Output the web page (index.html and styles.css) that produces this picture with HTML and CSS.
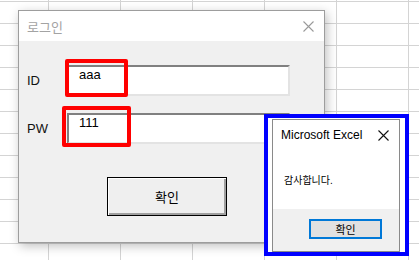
FILE: index.html
```html
<!DOCTYPE html>
<html lang="ko">
<head>
    <meta charset="UTF-8">
    <title>로그인</title>
    <link rel="stylesheet" href="styles.css">
</head>
<body>
    <div class="sheet">
        <!-- 로그인 폼 -->
        <div class="login-window">
            <div class="title-bar">
                <span class="title">로그인</span>
                <svg class="close gray" width="11" height="11" viewBox="0 0 11 11">
                    <path d="M0.5 0.5 L10.5 10.5 M10.5 0.5 L0.5 10.5" stroke="currentColor" stroke-width="1.1" fill="none"/>
                </svg>
            </div>
            <div class="login-body">
                <div class="form-row">
                    <label for="userId">ID</label>
                    <div class="textbox" id="userId">aaa</div>
                </div>
                <div class="form-row">
                    <label for="userPw">PW</label>
                    <div class="textbox" id="userPw">111</div>
                </div>
                <button class="ok-button">확인</button>
            </div>
        </div>

        <div class="mark mark-id"></div>
        <div class="mark mark-pw"></div>

        <!-- 메시지 박스 -->
        <div class="msg-frame">
            <div class="msg-box">
                <div class="msg-title">
                    <span>Microsoft Excel</span>
                    <svg class="close" width="11" height="11" viewBox="0 0 11 11">
                        <path d="M0.5 0.5 L10.5 10.5 M10.5 0.5 L0.5 10.5" stroke="currentColor" stroke-width="1.1" fill="none"/>
                    </svg>
                </div>
                <div class="msg-text">감사합니다.</div>
                <div class="msg-footer">
                    <button class="msg-button">확인</button>
                </div>
            </div>
        </div>
    </div>
</body>
</html>
```

FILE: styles.css
```css
* {
    margin: 0;
    padding: 0;
    box-sizing: border-box;
    font-family: 'Liberation Sans', 'Noto Sans CJK KR', sans-serif;
}

body {
    width: 419px;
    height: 260px;
    overflow: hidden;
    background-color: #fff;
    background-image:
        linear-gradient(90deg, #d4d4d4 1px, transparent 1px),
        linear-gradient(180deg, #d4d4d4 1px, transparent 1px);
    background-size: 72px 22px;
    background-position: 48px 1px;
}

.sheet {
    position: relative;
    width: 419px;
    height: 260px;
}

/* 로그인 창 */
.login-window {
    position: absolute;
    left: 18px;
    top: 10px;
    width: 307px;
    height: 233px;
    border: 1px solid #9d9d9d;
    background: #f0f0f0;
    box-shadow: 2px 3px 10px rgba(0, 0, 0, 0.25);
    display: flex;
    flex-direction: column;
}

.title-bar {
    height: 30px;
    background: #fff;
    display: flex;
    align-items: center;
    justify-content: space-between;
    padding: 0 10px 0 8px;
}

.title {
    font-size: 13px;
    color: #a3a3a3;
}

.close {
    display: block;
    color: #111;
}

.close.gray {
    color: #9a9a9a;
}

.login-body {
    padding: 24px 0 0 8px;
    display: flex;
    flex-direction: column;
    gap: 17px;
}

.form-row {
    display: flex;
    align-items: center;
}

.form-row label {
    width: 40px;
    font-size: 13px;
    color: #111;
}

.textbox {
    width: 223px;
    height: 31px;
    background: #fff;
    border-top: 2px solid #808080;
    border-left: 2px solid #808080;
    border-right: 2px solid #e3e3e3;
    border-bottom: 2px solid #e3e3e3;
    padding: 1px 0 0 10px;
    font-size: 13px;
    line-height: 14px;
    color: #000;
}

.ok-button {
    width: 120px;
    height: 39px;
    margin: 16px 0 0 80px;
    background: #efefef;
    border: 1px solid #000;
    box-shadow: inset 1px 1px 0 #fff, inset -2px -2px 0 #a0a0a0;
    font-size: 13px;
    color: #000;
}

/* 강조 표시 */
.mark {
    position: absolute;
    border: 4px solid #ff0000;
    border-radius: 2px;
}

.mark-id {
    left: 65px;
    top: 59px;
    width: 63px;
    height: 38px;
}

.mark-pw {
    left: 62px;
    top: 106px;
    width: 69px;
    height: 41px;
}

.msg-frame {
    position: absolute;
    left: 264px;
    top: 114px;
    width: 145px;
    height: 142px;
    border: 4px solid #0000ff;
    background: #fff;
    padding: 1px 0 0 4px;
}

.msg-box {
    width: 128px;
    height: 133px;
    border: 1px solid #8a8a8a;
    background: #fff;
    display: flex;
    flex-direction: column;
}

.msg-title {
    height: 30px;
    display: flex;
    align-items: center;
    justify-content: space-between;
    padding: 0 10px 0 8px;
    font-family: 'Open Sans', 'Noto Sans', sans-serif;
    font-size: 12px;
    color: #000;
}

.msg-text {
    flex: 1;
    display: flex;
    align-items: center;
    padding: 0 0 0 11px;
    font-size: 10px;
    color: #000;
}

.msg-footer {
    height: 42px;
    background: #f0f0f0;
    display: flex;
    justify-content: flex-end;
    padding: 10px 17px 0 0;
}

.msg-button {
    width: 73px;
    height: 20px;
    background: #e1e1e1;
    border: 2px solid #0078d7;
    font-size: 11px;
    color: #000;
}
```
